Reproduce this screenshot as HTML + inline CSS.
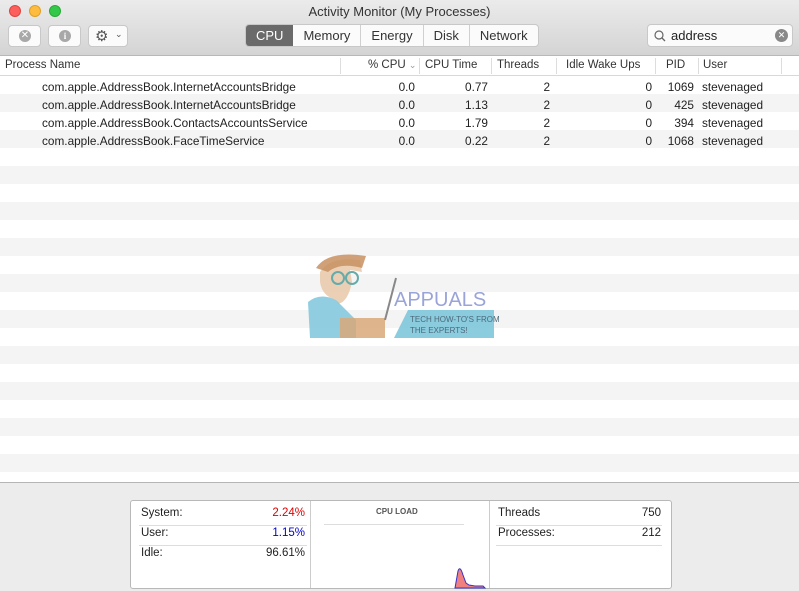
<!DOCTYPE html>
<html><head><style>
*{margin:0;padding:0;box-sizing:border-box}
body{width:799px;height:591px;overflow:hidden;font-family:"Liberation Sans",sans-serif;font-size:11.8px;color:#222;background:#fff;position:relative}
.tb{position:absolute;left:0;top:0;width:799px;height:56px;background:linear-gradient(#ebebeb,#d4d4d4);border-bottom:1px solid #b8b8b8}
.title{position:absolute;top:4px;left:0;width:799px;text-align:center;font-size:13px;color:#333}
.dot{position:absolute;top:5px;width:12px;height:12px;border-radius:50%}
.btn{position:absolute;top:25px;height:22px;background:#fbfbfb;border:1px solid #c8c8c8;border-radius:4px}
.seg{position:absolute;top:24px;left:245px;height:23px;display:flex;border:1px solid #c8c8c8;border-radius:4px;overflow:hidden;background:#fbfbfb}
.seg div{padding:0 10px;line-height:21px;font-size:13px;color:#333;border-left:1px solid #d0d0d0}
.seg div.on{background:#6a6a6a;color:#fff;border:none}
.search{position:absolute;top:24px;left:647px;width:146px;height:23px;background:#fbfbfb;border:1px solid #c8c8c8;border-radius:4px;font-size:13px;line-height:21px;padding-left:23px}
.hdr{position:absolute;top:56px;left:0;width:799px;height:20px;border-bottom:1px solid #d8d8d8;background:#fff}
.hdr span{position:absolute;top:3px;font-size:11.5px;color:#333}
.sep{position:absolute;top:2px;width:1px;height:16px;background:#ddd}
.row{position:absolute;left:0;width:799px;height:18px}
.row span{position:absolute;top:3px;font-size:11.8px}
.r{text-align:right}
.bot{position:absolute;top:482px;left:0;width:799px;height:109px;background:#ececec;border-top:1px solid #b5b5b5}
.box{position:absolute;left:130px;top:17px;width:542px;height:89px;background:#fff;border:1px solid #b8b8b8;border-radius:3px}
.box span{position:absolute;font-size:11.5px}
.hl{position:absolute;height:1px;background:#ddd}
</style></head><body>
<div class="tb">
<div class="title">Activity Monitor (My Processes)</div>
<div class="dot" style="left:9px;background:#fc605c;border:1px solid #e0443e"></div>
<div class="dot" style="left:29px;background:#fdbc40;border:1px solid #dea123"></div>
<div class="dot" style="left:49px;background:#34c84a;border:1px solid #27aa35"></div>
<div class="btn" style="left:8px;width:33px"><div style="position:absolute;left:10px;top:4px;width:12px;height:12px;border-radius:50%;background:#a8a8a8;color:#fff;font-size:10px;line-height:12px;text-align:center">✕</div></div>
<div class="btn" style="left:48px;width:33px"><div style="position:absolute;left:10px;top:4px;width:12px;height:12px;border-radius:50%;background:#a8a8a8;color:#fff;font-size:9px;font-weight:bold;line-height:12px;text-align:center;font-family:'Liberation Serif',serif">i</div></div>
<div class="btn" style="left:88px;width:40px"><span style="position:absolute;left:6px;top:1px;font-size:15px;color:#555">⚙</span><span style="position:absolute;left:26px;top:3px;font-size:9px;color:#555">⌄</span></div>
<div class="seg"><div class="on">CPU</div><div style="border:none">Memory</div><div>Energy</div><div>Disk</div><div>Network</div></div>
<div class="search"><svg style="position:absolute;left:6px;top:5px" width="12" height="12"><circle cx="5" cy="5" r="4" fill="none" stroke="#666" stroke-width="1.2"/><line x1="8" y1="8" x2="11" y2="11" stroke="#666" stroke-width="1.3"/></svg>address<div style="position:absolute;right:4px;top:4px;width:13px;height:13px;border-radius:50%;background:#888;color:#fff;font-size:9px;line-height:13px;text-align:center">✕</div></div>
</div>
<div class="hdr">
<span style="left:5px">Process Name</span>
<div class="sep" style="left:340px"></div><span style="left:368px">% CPU <span style="position:static;color:#999;font-size:9px">⌄</span></span>
<div class="sep" style="left:419px"></div><span style="left:425px">CPU Time</span>
<div class="sep" style="left:491px"></div><span style="left:497px">Threads</span>
<div class="sep" style="left:556px"></div><span style="left:566px">Idle Wake Ups</span>
<div class="sep" style="left:655px"></div><span style="left:666px">PID</span>
<div class="sep" style="left:698px"></div><span style="left:703px">User</span>
<div class="sep" style="left:781px"></div>
</div>
<div class="row" style="top:77px"><span style="left:42px">com.apple.AddressBook.InternetAccountsBridge</span><span style="left:380px;width:35px" class="r">0.0</span><span style="left:440px;width:48px" class="r">0.77</span><span style="left:510px;width:40px" class="r">2</span><span style="left:600px;width:52px" class="r">0</span><span style="left:660px;width:34px" class="r">1069</span><span style="left:702px">stevenaged</span></div>
<div class="row" style="top:94px;background:#f4f4f4"><span style="left:42px;top:4px">com.apple.AddressBook.InternetAccountsBridge</span><span style="left:380px;width:35px;top:4px" class="r">0.0</span><span style="left:440px;width:48px;top:4px" class="r">1.13</span><span style="left:510px;width:40px;top:4px" class="r">2</span><span style="left:600px;width:52px;top:4px" class="r">0</span><span style="left:660px;width:34px;top:4px" class="r">425</span><span style="left:702px;top:4px">stevenaged</span></div>
<div class="row" style="top:113px"><span style="left:42px">com.apple.AddressBook.ContactsAccountsService</span><span style="left:380px;width:35px" class="r">0.0</span><span style="left:440px;width:48px" class="r">1.79</span><span style="left:510px;width:40px" class="r">2</span><span style="left:600px;width:52px" class="r">0</span><span style="left:660px;width:34px" class="r">394</span><span style="left:702px">stevenaged</span></div>
<div class="row" style="top:130px;background:#f4f4f4"><span style="left:42px;top:4px">com.apple.AddressBook.FaceTimeService</span><span style="left:380px;width:35px;top:4px" class="r">0.0</span><span style="left:440px;width:48px;top:4px" class="r">0.22</span><span style="left:510px;width:40px;top:4px" class="r">2</span><span style="left:600px;width:52px;top:4px" class="r">0</span><span style="left:660px;width:34px;top:4px" class="r">1068</span><span style="left:702px;top:4px">stevenaged</span></div>
<div style="position:absolute;top:148px;left:0;width:799px;height:326px;background:repeating-linear-gradient(#fff 0 18px,#f4f4f4 18px 36px)"></div>
<svg style="position:absolute;left:300px;top:250px" width="200" height="90">
<path d="M20 22 Q30 6 60 10 L62 22 L50 20 L52 32 Q48 52 38 54 L36 50 Q22 46 20 32 Z" fill="#e8c8a8" opacity=".85"/>
<path d="M16 18 Q28 0 66 6 L62 18 Q40 12 28 22 Z" fill="#c89060" opacity=".85"/>
<circle cx="38" cy="28" r="6" fill="none" stroke="#6aa" stroke-width="2"/><circle cx="52" cy="28" r="6" fill="none" stroke="#6aa" stroke-width="2"/>
<path d="M8 52 Q20 42 36 50 L56 70 L56 88 L10 88 Z" fill="#7fc6dc" opacity=".85"/>
<rect x="40" y="68" width="45" height="20" fill="#d8a878" opacity=".85"/>
<line x1="85" y1="70" x2="96" y2="28" stroke="#888" stroke-width="2"/>
<text x="94" y="56" font-family="Liberation Sans" font-size="20" fill="#9aa4d8">APPUALS</text>
<polygon points="108,60 194,60 194,88 94,88" fill="#7fc6dc" opacity=".9"/>
<text x="110" y="72" font-family="Liberation Sans" font-size="8" fill="#4a6a7a">TECH HOW-TO'S FROM</text>
<text x="110" y="83" font-family="Liberation Sans" font-size="8" fill="#4a6a7a">THE EXPERTS!</text>
</svg>
<div class="bot"><div class="box">
<span style="left:10px;top:6px">System:</span><span style="left:120px;top:6px;width:54px;color:#d00" class="r">2.24%</span>
<div class="hl" style="left:8px;width:168px;top:24px"></div>
<span style="left:10px;top:26px">User:</span><span style="left:120px;top:26px;width:54px;color:#00c" class="r">1.15%</span>
<div class="hl" style="left:8px;width:168px;top:44px"></div>
<span style="left:10px;top:46px">Idle:</span><span style="left:120px;top:46px;width:54px" class="r">96.61%</span>
<div style="position:absolute;left:179px;top:0;width:1px;height:87px;background:#ccc"></div>
<span style="left:245px;top:6px;font-size:8px;font-weight:bold;color:#555">CPU LOAD</span>
<div class="hl" style="left:193px;width:140px;top:23px"></div>
<svg style="position:absolute;left:322px;top:62px" width="40" height="26"><path d="M2 25 L5 8 Q7 2 10 12 L13 20 L16 22 L22 23 L30 23 L32 25 Z" fill="#f08080" stroke="#33c" stroke-width="1"/></svg>
<div style="position:absolute;left:358px;top:0;width:1px;height:87px;background:#ccc"></div>
<span style="left:367px;top:6px">Threads</span><span style="left:480px;top:6px;width:50px" class="r">750</span>
<div class="hl" style="left:365px;width:166px;top:24px"></div>
<span style="left:367px;top:26px">Processes:</span><span style="left:480px;top:26px;width:50px" class="r">212</span>
<div class="hl" style="left:365px;width:166px;top:44px"></div>
</div></div>
</body></html>
